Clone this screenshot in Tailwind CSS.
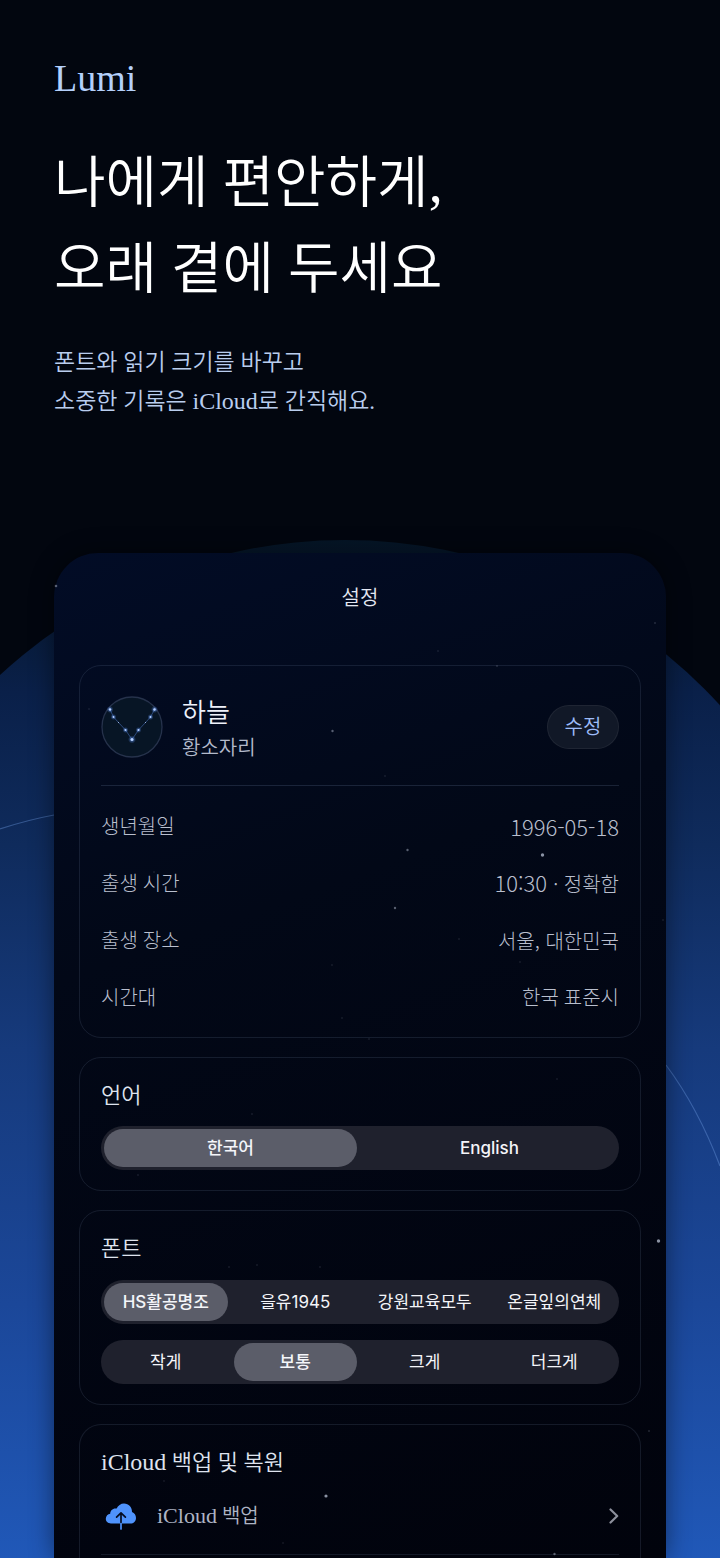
<!DOCTYPE html>
<html lang="ko">
<head>
<meta charset="utf-8">
<meta name="viewport" content="width=device-width, initial-scale=1">
<title>Lumi</title>
<script src="https://cdn.jsdelivr.net/npm/@tailwindcss/browser@4"></script>
</head>
<body class="bg-[#02060f]">
<div class="relative isolate flex min-h-screen flex-col overflow-hidden bg-[#02060f] font-['Liberation_Serif','Noto_Sans_CJK_KR',sans-serif] font-[350]">

  <!-- Planet horizon and orbit lines -->
  <svg class="absolute inset-x-0 top-0 -z-10 h-full w-full" viewBox="0 0 720 1558" preserveAspectRatio="none" fill="none" aria-hidden="true">
    <defs>
      <linearGradient id="planet" x1="0" y1="540" x2="0" y2="1558" gradientUnits="userSpaceOnUse">
        <stop offset="0" stop-color="#051526"/>
        <stop offset=".15" stop-color="#0a2049"/>
        <stop offset=".3" stop-color="#0f2b5c"/>
        <stop offset=".5" stop-color="#163a7c"/>
        <stop offset=".75" stop-color="#1b4799"/>
        <stop offset="1" stop-color="#2058b8"/>
      </linearGradient>
    </defs>
    <path d="M-163 1558V1048A508 508 0 0 1 853 1048V1558Z" fill="url(#planet)"/>
    <path d="M0 829Q27 820 54 815M666 1065Q698 1108 720 1166" stroke="#6f9be0" stroke-opacity=".4" stroke-width="1.200"/>
  </svg>

  <header class="px-[54px] pt-14">
    <p class="text-[38px] leading-[44px] text-[#b4d0fb]">Lumi</p>
    <h1 class="mt-10 text-[56px] leading-[86px] text-white">나에게 편안하게,<br>오래 곁에 두세요</h1>
    <p class="mt-[31px] text-[23px] leading-[39px] text-[#b9cdee]">폰트와 읽기 크기를 바꾸고<br>소중한 기록은 <span class="text-2xl leading-none">iCloud</span>로 간직해요.</p>
  </header>

  <main class="relative mx-[54px] mt-[132px] flex grow flex-col gap-[19px] rounded-t-[44px] bg-linear-160 from-[#020c26] via-[#020817] via-35% to-[#01030c] px-[25px] shadow-[0_0_24px_rgba(0,0,0,0.45)]">

    <!-- Stars scattered over the panel -->
    <svg class="pointer-events-none absolute inset-0 h-full w-full" viewBox="54 553 612 1005" preserveAspectRatio="none" fill="#aeb6c8" aria-hidden="true">
      <g opacity=".8"><circle cx="542.500" cy="855" r="1.700"/><circle cx="326" cy="1496" r="1.600"/><circle cx="658.500" cy="1241" r="1.700"/></g>
      <g opacity=".5"><circle cx="407.500" cy="850" r="1.200"/><circle cx="395" cy="908" r="1.200"/><circle cx="332.500" cy="731" r="1.200"/><circle cx="554.500" cy="1554" r="1.200"/><circle cx="56" cy="586" r="1.300"/></g>
      <g opacity=".2"><circle cx="655" cy="623" r="1"/><circle cx="438" cy="651" r=".8"/><circle cx="497" cy="666" r="1"/><circle cx="89" cy="709" r=".8"/><circle cx="385" cy="776" r=".8"/><circle cx="125" cy="891" r=".8"/><circle cx="154" cy="872" r=".8"/><circle cx="332" cy="965" r=".8"/><circle cx="459" cy="939" r=".8"/><circle cx="520" cy="962" r=".8"/><circle cx="342" cy="1018" r=".8"/><circle cx="369" cy="1039" r=".8"/><circle cx="663" cy="920" r=".8"/><circle cx="557" cy="1079" r=".8"/><circle cx="252" cy="1114" r=".8"/><circle cx="138" cy="1175" r=".8"/><circle cx="229" cy="1267" r=".8"/><circle cx="257" cy="1265" r=".8"/><circle cx="320" cy="1267" r=".8"/><circle cx="649" cy="1431" r="1"/><circle cx="164" cy="1481" r=".8"/><circle cx="283" cy="1543" r=".8"/></g>
    </svg>

    <h2 class="pt-[31px] pb-[34px] text-center text-xl leading-7 text-[#e4e8f3]">설정</h2>

    <section class="rounded-[22px] border border-[#8ca0c8]/14 px-[21px] pt-[30px] pb-[11px]" aria-label="프로필">
      <div class="flex h-[90px] items-start border-b border-[#8ca0c8]/18">
        <svg class="size-[62px] shrink-0" viewBox="0 0 62 62" fill="none" aria-hidden="true">
          <defs>
            <radialGradient id="glow"><stop offset="0" stop-color="#5d92f2" stop-opacity=".75"/><stop offset="1" stop-color="#5d92f2" stop-opacity="0"/></radialGradient>
          </defs>
          <circle cx="31" cy="31" r="30" fill="#071525" stroke="#26324b" stroke-width="1.300"/>
          <path d="M9 13.500L12.500 21L17.500 26.500L24.500 34L31 43.500L37.500 34L44.500 26.500L49.500 21L53.500 13.500" stroke="#35558f" stroke-width=".8"/>
          <g fill="url(#glow)"><circle cx="9" cy="13.500" r="3.500"/><circle cx="12.500" cy="21" r="3"/><circle cx="24.500" cy="34" r="3"/><circle cx="31" cy="43.500" r="4"/><circle cx="37.500" cy="34" r="3"/><circle cx="49.500" cy="21" r="3"/><circle cx="53.500" cy="13.500" r="3.500"/></g>
          <g fill="#b9d2ff"><circle cx="9" cy="13.500" r="1.200"/><circle cx="12.500" cy="21" r=".9"/><circle cx="17.500" cy="26.500" r=".5"/><circle cx="24.500" cy="34" r="1"/><circle cx="31" cy="43.500" r="1.500"/><circle cx="37.500" cy="34" r="1"/><circle cx="44.500" cy="26.500" r=".5"/><circle cx="49.500" cy="21" r=".9"/><circle cx="53.500" cy="13.500" r="1.200"/></g>
        </svg>
        <div class="ml-[19px] grow">
          <p class="text-[26px] leading-9 text-[#eef1fa]">하늘</p>
          <p class="text-xl leading-8 text-[#b3bacb]">황소자리</p>
        </div>
        <button type="button" class="mt-[9px] h-11 w-[72px] rounded-full border border-white/6 bg-[#111827] text-xl text-[#9dbcf8]">수정</button>
      </div>
      <dl class="pt-3 text-xl font-light text-[#b9bfce]">
        <div class="flex h-[57px] items-center justify-between"><dt>생년월일</dt><dd class="font-['Noto_Sans_CJK_KR',sans-serif] text-[22px]">1996-05-18</dd></div>
        <div class="flex h-[57px] items-center justify-between"><dt>출생 시간</dt><dd class="font-['Noto_Sans_CJK_KR',sans-serif]"><span class="text-[22px] leading-none">10:30 </span>· 정확함</dd></div>
        <div class="flex h-[57px] items-center justify-between"><dt>출생 장소</dt><dd class="font-['Noto_Sans_CJK_KR',sans-serif]">서울, 대한민국</dd></div>
        <div class="flex h-[57px] items-center justify-between"><dt>시간대</dt><dd>한국 표준시</dd></div>
      </dl>
    </section>

    <section class="rounded-[22px] border border-[#8ca0c8]/14 px-[21px] pt-5 pb-5">
      <h3 class="text-[22px] leading-9 text-[#dfe3ee]">언어</h3>
      <div role="radiogroup" aria-label="언어" class="mt-3 grid h-11 grid-cols-2 rounded-full bg-[#1f212d] font-['Inter','Noto_Sans_CJK_KR',sans-serif] text-[17px] font-medium text-[#f4f5f9]">
        <label class="relative m-[3px] flex items-center justify-center rounded-full pt-0.5 has-checked:bg-[#5b5d69]"><input type="radio" name="lang" class="sr-only" checked>한국어</label>
        <label class="relative m-[3px] flex items-center justify-center rounded-full pt-0.5 has-checked:bg-[#5b5d69]"><input type="radio" name="lang" class="sr-only">English</label>
      </div>
    </section>

    <section class="rounded-[22px] border border-[#8ca0c8]/14 px-[21px] pt-5 pb-5">
      <h3 class="text-[22px] leading-9 text-[#dfe3ee]">폰트</h3>
      <div role="radiogroup" aria-label="폰트" class="mt-[13px] grid h-11 grid-cols-4 rounded-full bg-[#1f212d] font-['Inter','Noto_Sans_CJK_KR',sans-serif] text-[17px] font-normal whitespace-nowrap text-[#f4f5f9]">
        <label class="relative m-[3px] flex items-center justify-center rounded-full pt-0.5 has-checked:bg-[#5b5d69] has-checked:font-medium"><input type="radio" name="font" class="sr-only" checked>HS활공명조</label>
        <label class="relative m-[3px] flex items-center justify-center rounded-full pt-0.5 has-checked:bg-[#5b5d69] has-checked:font-medium"><input type="radio" name="font" class="sr-only">을유1945</label>
        <label class="relative m-[3px] flex items-center justify-center rounded-full pt-0.5 has-checked:bg-[#5b5d69] has-checked:font-medium"><input type="radio" name="font" class="sr-only">강원교육모두</label>
        <label class="relative m-[3px] flex items-center justify-center rounded-full pt-0.5 has-checked:bg-[#5b5d69] has-checked:font-medium"><input type="radio" name="font" class="sr-only">온글잎의연체</label>
      </div>
      <div role="radiogroup" aria-label="글자 크기" class="mt-4 grid h-11 grid-cols-4 rounded-full bg-[#1f212d] font-['Inter','Noto_Sans_CJK_KR',sans-serif] text-[17px] font-normal whitespace-nowrap text-[#f4f5f9]">
        <label class="relative m-[3px] flex items-center justify-center rounded-full pt-0.5 has-checked:bg-[#5b5d69] has-checked:font-medium"><input type="radio" name="size" class="sr-only">작게</label>
        <label class="relative m-[3px] flex items-center justify-center rounded-full pt-0.5 has-checked:bg-[#5b5d69] has-checked:font-medium"><input type="radio" name="size" class="sr-only" checked>보통</label>
        <label class="relative m-[3px] flex items-center justify-center rounded-full pt-0.5 has-checked:bg-[#5b5d69] has-checked:font-medium"><input type="radio" name="size" class="sr-only">크게</label>
        <label class="relative m-[3px] flex items-center justify-center rounded-full pt-0.5 has-checked:bg-[#5b5d69] has-checked:font-medium"><input type="radio" name="size" class="sr-only">더크게</label>
      </div>
    </section>

    <section class="grow rounded-t-[22px] border border-b-0 border-[#8ca0c8]/14 px-[21px] pt-5 pb-0.5">
      <h3 class="text-[22px] leading-9 text-[#dfe3ee]"><span class="text-2xl leading-none">iCloud</span> 백업 및 복원</h3>
      <button type="button" class="flex h-[74px] w-full items-center border-b border-[#8ca0c8]/14 pb-1 text-left text-xl text-[#aeb4c4]">
        <svg class="ml-1 h-[28px] w-8 shrink-0" viewBox="0 0 32 28" fill="none" aria-hidden="true">
          <path d="M6 21.500C3 21.500 .8 19.500 .8 16.800C.8 14 2.800 12 5.200 11.700C5.200 8.500 8.200 5.800 11.600 6.600C13 3.500 15.800 1.500 19 1.500C23.800 1.500 27.200 5.200 27 10C29.500 11 31 13.200 31 15.900C31 19.100 28.500 21.500 25.500 21.500Z" fill="#4f93fc"/>
          <path d="M16 21.500V11.200M11.600 15.200L16 10.800L20.400 15.200" stroke="#050d22" stroke-width="1.700" stroke-linecap="round" stroke-linejoin="round"/>
          <path d="M16 21.500V27" stroke="#4f93fc" stroke-width="1.700" stroke-linecap="round"/>
        </svg>
        <span class="ml-5 grow"><span class="text-[22px] leading-none">iCloud</span> 백업</span>
        <svg class="h-4 w-2.5 shrink-0" viewBox="0 0 10 16" fill="none" stroke="#8d909c" stroke-width="2.200" stroke-linecap="round" stroke-linejoin="round" aria-hidden="true"><path d="M1.500 1.500L8.200 8L1.500 14.500"/></svg>
      </button>
    </section>
  </main>
</div>
</body>
</html>
